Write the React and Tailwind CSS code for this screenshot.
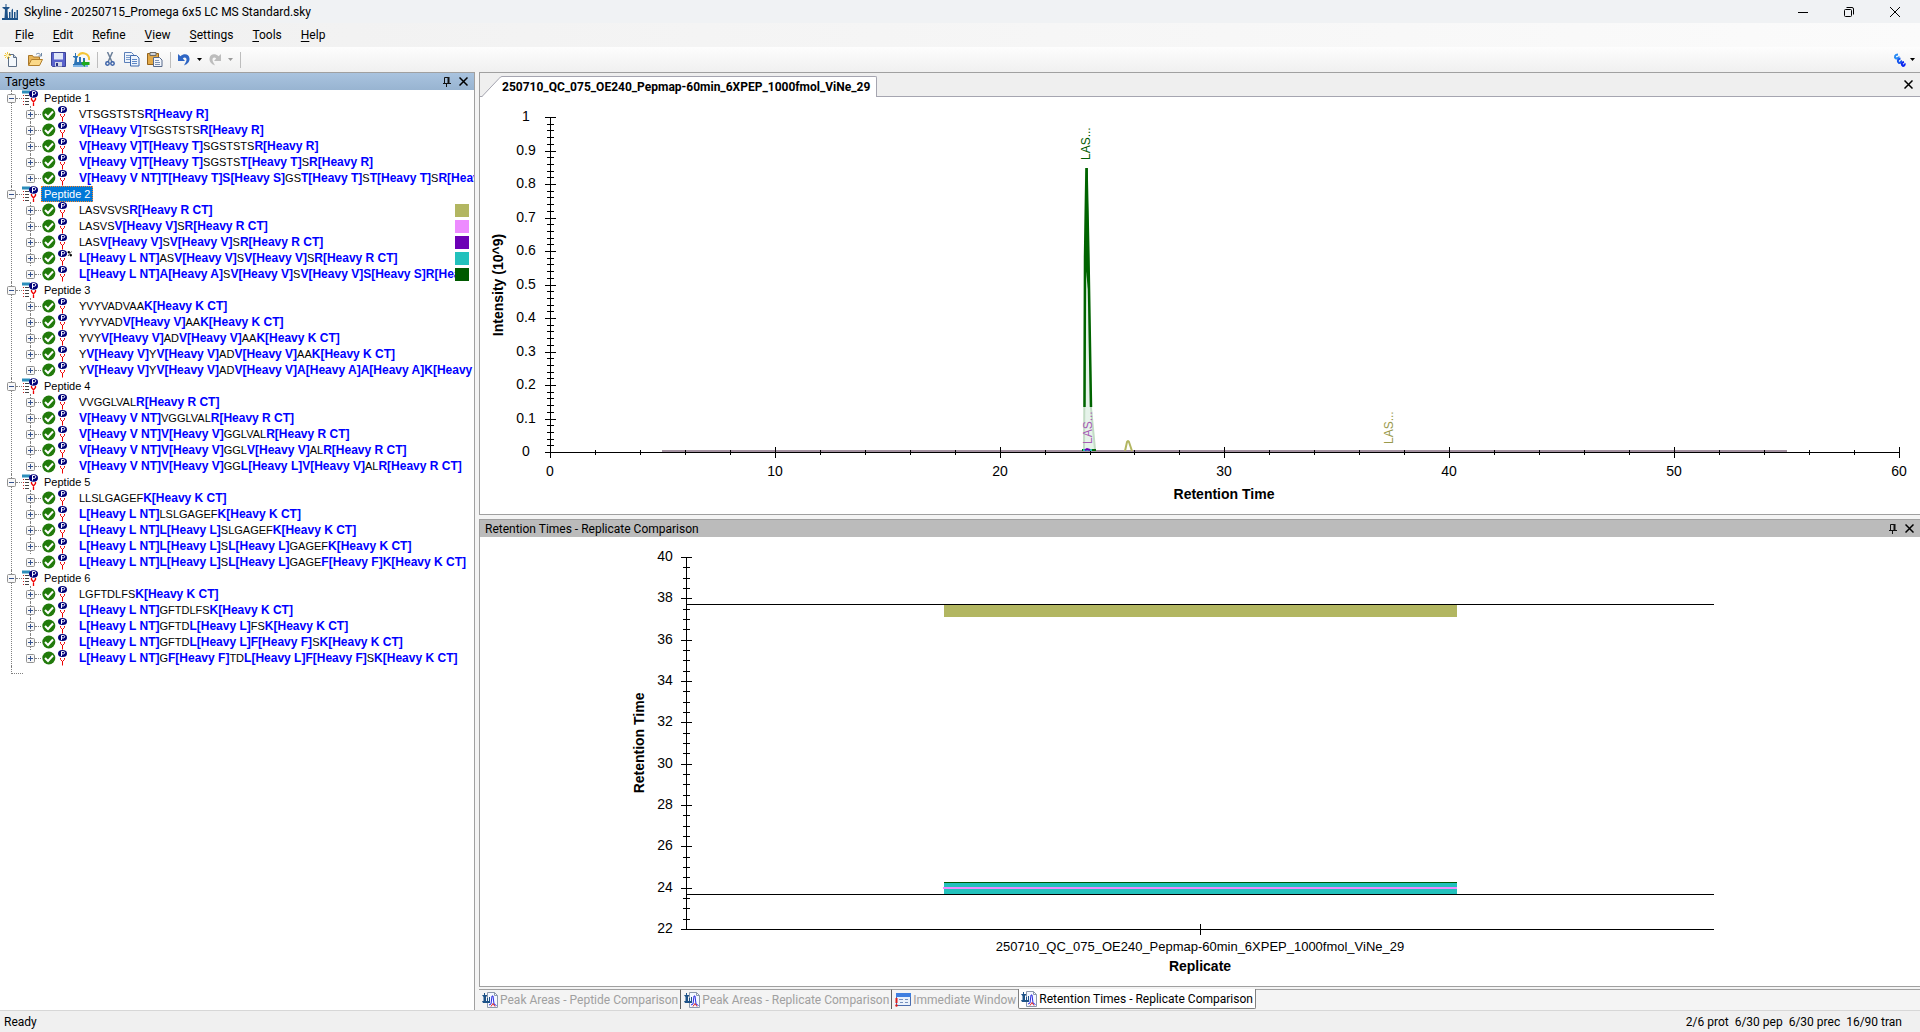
import { Fragment } from 'react';

// Bold blue runs are wrapped in *...*
const TREE = [
  {
    name: 'Peptide 1',
    rows: [
      'VTSGSTSTS*R[Heavy R]*',
      '*V[Heavy V]*TSGSTSTS*R[Heavy R]*',
      '*V[Heavy V]T[Heavy T]*SGSTSTS*R[Heavy R]*',
      '*V[Heavy V]T[Heavy T]*SGSTS*T[Heavy T]*S*R[Heavy R]*',
      '*V[Heavy V NT]T[Heavy T]S[Heavy S]*GS*T[Heavy T]*S*T[Heavy T]*S*R[Heavy R]*',
    ],
  },
  {
    name: 'Peptide 2',
    selected: true,
    rows: [
      'LASVSVS*R[Heavy R CT]*',
      'LASVS*V[Heavy V]*S*R[Heavy R CT]*',
      'LAS*V[Heavy V]*S*V[Heavy V]*S*R[Heavy R CT]*',
      '*L[Heavy L NT]*AS*V[Heavy V]*S*V[Heavy V]*S*R[Heavy R CT]*',
      '*L[Heavy L NT]A[Heavy A]*S*V[Heavy V]*S*V[Heavy V]S[Heavy S]R[Heavy R CT]*',
    ],
    swatches: ['bg-[#b2b661]', 'bg-[#ed8bff]', 'bg-[#6c00b5]', 'bg-[#22c1bc]', 'bg-[#005a00]'],
    best: 3,
  },
  {
    name: 'Peptide 3',
    rows: [
      'YVYVADVAA*K[Heavy K CT]*',
      'YVYVAD*V[Heavy V]*AA*K[Heavy K CT]*',
      'YVY*V[Heavy V]*AD*V[Heavy V]*AA*K[Heavy K CT]*',
      'Y*V[Heavy V]*Y*V[Heavy V]*AD*V[Heavy V]*AA*K[Heavy K CT]*',
      'Y*V[Heavy V]*Y*V[Heavy V]*AD*V[Heavy V]A[Heavy A]A[Heavy A]K[Heavy K CT]*',
    ],
  },
  {
    name: 'Peptide 4',
    rows: [
      'VVGGLVAL*R[Heavy R CT]*',
      '*V[Heavy V NT]*VGGLVAL*R[Heavy R CT]*',
      '*V[Heavy V NT]V[Heavy V]*GGLVAL*R[Heavy R CT]*',
      '*V[Heavy V NT]V[Heavy V]*GGL*V[Heavy V]*AL*R[Heavy R CT]*',
      '*V[Heavy V NT]V[Heavy V]*GG*L[Heavy L]V[Heavy V]*AL*R[Heavy R CT]*',
    ],
  },
  {
    name: 'Peptide 5',
    rows: [
      'LLSLGAGEF*K[Heavy K CT]*',
      '*L[Heavy L NT]*LSLGAGEF*K[Heavy K CT]*',
      '*L[Heavy L NT]L[Heavy L]*SLGAGEF*K[Heavy K CT]*',
      '*L[Heavy L NT]L[Heavy L]*S*L[Heavy L]*GAGEF*K[Heavy K CT]*',
      '*L[Heavy L NT]L[Heavy L]*S*L[Heavy L]*GAGE*F[Heavy F]K[Heavy K CT]*',
    ],
  },
  {
    name: 'Peptide 6',
    rows: [
      'LGFTDLFS*K[Heavy K CT]*',
      '*L[Heavy L NT]*GFTDLFS*K[Heavy K CT]*',
      '*L[Heavy L NT]*GFTD*L[Heavy L]*FS*K[Heavy K CT]*',
      '*L[Heavy L NT]*GFTD*L[Heavy L]F[Heavy F]*S*K[Heavy K CT]*',
      '*L[Heavy L NT]*G*F[Heavy F]*TD*L[Heavy L]F[Heavy F]*S*K[Heavy K CT]*',
    ],
  },
];

const MENU = ['File', 'Edit', 'Refine', 'View', 'Settings', 'Tools', 'Help'];

const range = (n) => Array.from({ length: n }, (_, i) => i);

/* ---------- icons ---------- */

function SkylineLogo() {
  return (
    <svg width="16" height="16" viewBox="0 0 16 16" fill="#1d5288">
      <path d="M0 14h16v2H0z" />
      <path d="M3.500 0h1v3h3v1L5.500 5.500 6 14H2.500L3 5.500.5 4V3h3z" />
      <path d="M7 8h1.500v6H7zM9.500 6l1.500-1.500V14H9.500zM12 8h1.500v6H12zM14.500 6H16v8h-1.500z" />
    </svg>
  );
}

function NewIcon() {
  return (
    <svg width="16" height="16" viewBox="0 0 16 16">
      <path d="M4.500 2.500h5l3 3v9h-8z" fill="#f4f8fc" stroke="#5e6f86" />
      <path d="M9.500 2.500v3h3" fill="#c5d3e4" stroke="#5e6f86" />
      <path d="M3.500 0v7M0 3.500h7M1 1l5 5M6 1L1 6" stroke="#f2c63c" />
      <circle cx="3.500" cy="3.500" r="1.500" fill="#fff6c0" />
    </svg>
  );
}

function OpenIcon() {
  return (
    <svg width="17" height="16" viewBox="0 0 17 16">
      <path d="M1.500 13V3.500h4l1 1.500h6v3" fill="#e8b659" stroke="#a9772a" />
      <path d="M1.500 13.500l3-6h11l-3 6z" fill="#fbd989" stroke="#b27f2c" />
      <path d="M9 2.500c2-2 4-1 5 1M14.500 1v3h-3" fill="none" stroke="#6d87a5" />
    </svg>
  );
}

function SaveIcon() {
  return (
    <svg width="15" height="15" viewBox="0 0 15 15">
      <path d="M.5.5h14v14h-13l-1-1z" fill="#5a63cc" stroke="#3b4298" />
      <path d="M3 1h9v6.500H3z" fill="#dfe6f8" />
      <path d="M4 10h7v4.500H4z" fill="#d3d8e6" />
      <path d="M5 11h2v3H5z" fill="#2b3285" />
    </svg>
  );
}

function PanoramaIcon() {
  return (
    <svg width="17" height="16" viewBox="0 0 17 16">
      <path d="M5 4a6 6 0 0 1 11 4" fill="none" stroke="#f4c536" strokeWidth="2" />
      <path d="M0 15V12h1l1-6-2-1V4h2V1h1v3h2v1L4 6v4h2V5h2v5h2V6h2v9z" fill="#2d74b5" />
      <path d="M0 13h15v2H0z" fill="#7fb5e6" />
      <path d="M8 11.500l4-3.500v2h4.500v3H12v2z" fill="#1faa1f" />
    </svg>
  );
}

function CutIcon() {
  return (
    <svg width="12" height="15" viewBox="0 0 12 15" fill="none">
      <path d="M2.500 0L7 10M7.500 0L3 10" stroke="#6b7f99" strokeWidth="1.500" />
      <circle cx="2.500" cy="11.500" r="1.700" stroke="#3d63a8" strokeWidth="1.500" />
      <circle cx="7.500" cy="11.500" r="1.700" stroke="#3d63a8" strokeWidth="1.500" />
    </svg>
  );
}

function CopyIcon() {
  return (
    <svg width="16" height="15" viewBox="0 0 16 15">
      <path d="M.5.500h7l2 2v8h-9z" fill="#eef4fc" stroke="#5b7fb8" />
      <path d="M2 3.500h4M2 5.500h4M2 7.500h4" stroke="#7b9ccc" />
      <path d="M6.500 3.500h6l2.500 2.500v8H6.500z" fill="#eef4fc" stroke="#3f69ad" />
      <path d="M8 7.500h5M8 9.500h5M8 11.500h5" stroke="#5c86c6" />
    </svg>
  );
}

function PasteIcon() {
  return (
    <svg width="16" height="15" viewBox="0 0 16 15">
      <path d="M.5 1.500h11v11H.5z" fill="#e2a948" stroke="#94631b" />
      <path d="M3 .5h6v3H3z" fill="#cfd3da" stroke="#6d6a63" />
      <path d="M6.500 5.500h6l2.500 2.500v6.500H6.500z" fill="#f2f6fc" stroke="#56688a" />
      <path d="M8 8.500h4M8 10.500h5M8 12.500h5" stroke="#7d92b5" />
    </svg>
  );
}

function UndoIcon({ color, flip }) {
  return (
    <svg width="12" height="13" viewBox="0 0 12 13" className={flip ? '-scale-x-100' : ''}>
      <path d="M0 1v7h7L4.800 5.500c2-2 4-.5 3.700 1.500S7 10.500 6 12.500c4-1.500 5.800-4.500 5.500-7C11 1 6 0 2.500 3.300z" fill={color} />
    </svg>
  );
}

function Caret({ color = '#000' }) {
  return (
    <svg width="5" height="3" viewBox="0 0 5 3">
      <path d="M0 0h5L2.500 3z" fill={color} />
    </svg>
  );
}

function HelixIcon() {
  return (
    <svg width="13" height="14" viewBox="0 0 13 14" fill="none" strokeWidth="2">
      <path d="M5 1.500C2 1.500 1 4 3 5.500c2 0 3-1 2.500-2" stroke="#2a8cf5" />
      <path d="M7.500 5.500c-3 .5-3.500 3-1.500 4.500 2 0 2.500-1.500 2-2.500" stroke="#1555ee" />
      <path d="M11 9c-2.500.5-3 2.500-1 4 1.500-.5 2-1.500 1.500-2.500" stroke="#0a25f0" />
    </svg>
  );
}

function PinIcon() {
  return (
    <svg width="8" height="10" viewBox="0 0 8 10">
      <path d="M1.500 6V.5h4V6M5 0v6M6 0v6M0 6.500h8M3.500 7v3" fill="none" stroke="#111" />
    </svg>
  );
}

function CloseIcon() {
  return (
    <svg width="9" height="9" viewBox="0 0 9 9">
      <path d="M.5.5l8 8M8.500.5l-8 8" stroke="#000" strokeWidth="1.500" />
    </svg>
  );
}

function ExpandBox({ open }) {
  return (
    <svg width="9" height="9" viewBox="0 0 9 9" className="shrink-0">
      <rect x=".5" y=".5" width="8" height="8" rx="1" fill="#f8f8f8" stroke="#919191" />
      <path d={open ? 'M2 4.500h5' : 'M2 4.500h5M4.500 2v5'} stroke="#33518f" />
    </svg>
  );
}

function CheckIcon() {
  return (
    <svg width="14" height="14" viewBox="0 0 14 14" className="shrink-0">
      <circle cx="6.800" cy="7" r="6.500" fill="#217a0b" />
      <path d="M3 7l3 3 5-5.500" fill="none" stroke="#fff" strokeWidth="2" />
    </svg>
  );
}

// "P" ball with the red y-shaped tail
function PeptideIcon({ best }) {
  return (
    <svg width="16" height="16" viewBox="0 0 16 16" className="shrink-0">
      <ellipse cx="4.500" cy="3.500" rx="4.500" ry="3.500" fill="#00007a" />
      <path d="M3.500 6V1.500h2q1.200.1 1.200 1.200t-1.200 1.200h-2" fill="none" stroke="#fff" />
      <path d="M2.500 8v1.500l2 2 2-2V8M4.500 11v4.500" fill="none" stroke="#ee0000" />
      {best && <path d="M10 1.500h1.500V3H10zM12 4.500h1.500V6H12zM13.500 1.500L10 6" fill="#000" stroke="#000" strokeWidth=".7" />}
    </svg>
  );
}

function GroupIcon() {
  return (
    <svg width="16" height="16" viewBox="0 0 16 16" className="shrink-0">
      <path d="M0 2h8" stroke="#2d8ebb" strokeWidth="3" />
      <path d="M1 5.500h1M1 8.500h1M1 11.500h1M1 14.500h1" stroke="#c22" />
      <path d="M3 5.500h4M3 8.500h4M3 11.500h4M3 14.500h4" stroke="#444" />
      <ellipse cx="11.500" cy="4" rx="4.500" ry="3.700" fill="#00007a" />
      <path d="M10.500 6.500v-5h2q1.300.2 1.300 1.400t-1.300 1.400h-2" fill="none" stroke="#fff" />
      <path d="M9.500 8v1.500l2 2.500 2-2.500V8M11.500 11.500V16" fill="none" stroke="#ee0000" strokeWidth="1.300" />
    </svg>
  );
}

function GraphIcon() {
  return (
    <svg width="16" height="16" viewBox="0 0 16 16" className="shrink-0">
      <path d="M5.500.5h7l3 3v12h-10z" fill="#f4f8ff" stroke="#8c98ab" />
      <path d="M12.500.5v3h3" fill="none" stroke="#8c98ab" />
      <path d="M0 9h8v2H1zM0 3h2V1h1v2h2v1L4 5v5H1.500V5zM5 6h1v4H5zM7 5h1v5H7z" fill="#1d5288" />
      <path d="M7 13l2-1 1-8h1l1 8 2.500 1.500" fill="none" stroke="#2a2ae0" />
      <path d="M9 14.500l2-3 2 3" fill="none" stroke="#e02020" />
    </svg>
  );
}

function ImmediateIcon() {
  return (
    <svg width="16" height="14" viewBox="0 0 16 14" className="shrink-0">
      <path d="M1.500.5h14v12h-14z" fill="#eaf1fb" stroke="#4a6cae" />
      <path d="M1 0h15v4H1z" fill="#3f7fe0" />
      <path d="M4 6.500h4M10 6.500h3M5 9.500h3M10 9.500h3" stroke="#7590bd" />
      <path d="M1.500 5v5" stroke="#dd1c1c" strokeWidth="2" />
      <circle cx="1.500" cy="12.500" r="1.200" fill="#dd1c1c" />
    </svg>
  );
}

/* ---------- tree ---------- */

function Sequence({ text }) {
  return (
    <span className="block whitespace-pre text-[11px] leading-4 text-black">
      {text.split('*').map((part, i) =>
        i % 2 ? (
          <b key={i} className="text-xs leading-none text-[#0000ff]">{part}</b>
        ) : (
          <Fragment key={i}>{part}</Fragment>
        )
      )}
    </span>
  );
}

function TargetGroup({ group }) {
  return (
    <li className="ml-[11px] border-l border-dotted border-[#808080]">
      <div className="-ml-[5px] flex h-4 items-center">
        <button type="button" aria-label={`Collapse ${group.name}`} className="flex">
          <ExpandBox open />
        </button>
        <span className="w-1.5 border-t border-dotted border-[#808080]" />
        <GroupIcon />
        <span
          className={`ml-[3px] flex h-4 items-center border px-0.5 text-[11px] leading-4 ${
            group.selected
              ? 'border-dotted border-[#ff8728] bg-[#0078d7] text-white'
              : 'border-transparent text-black'
          }`}
        >
          {group.name}
        </span>
      </div>
      <ul className="ml-[18px]">
        {group.rows.map((row, i) => (
          <li
            key={row}
            className={`flex h-4 items-center border-l ${i < group.rows.length - 1 ? 'border-dotted border-[#808080]' : 'border-transparent'}`}
          >
            <button type="button" aria-label="Expand" className="-ml-[5px] flex">
              <ExpandBox />
            </button>
            <span className="mr-px w-1.5 shrink-0 border-t border-dotted border-[#808080]" />
            <CheckIcon />
            <span className="ml-0.5 flex">
              <PeptideIcon best={group.best === i} />
            </span>
            <span className="min-w-0 flex-1 overflow-hidden pl-[5px]">
              <Sequence text={row} />
            </span>
            {group.swatches && <span className={`mr-[5px] h-[13px] w-3.5 shrink-0 ${group.swatches[i]}`} />}
          </li>
        ))}
      </ul>
    </li>
  );
}

function TargetsPanel() {
  return (
    <aside className="flex w-[475px] shrink-0 flex-col border-r border-t border-[#a0a0a0] bg-white">
      <header className="flex h-[17px] shrink-0 items-center bg-linear-to-b from-[#a9c3df] to-[#98b4d1] pl-[5px] pr-1.5 text-xs text-black">
        <h2 className="flex-1">Targets</h2>
        <button type="button" aria-label="Auto hide" className="mr-2">
          <PinIcon />
        </button>
        <button type="button" aria-label="Close">
          <CloseIcon />
        </button>
      </header>
      <ul className="flex-1 overflow-hidden font-['Liberation_Sans',Arial,sans-serif]">
        {TREE.map((group) => (
          <TargetGroup key={group.name} group={group} />
        ))}
        <li className="ml-[11px] h-2 w-3 border-b border-l border-dotted border-[#808080]" />
      </ul>
    </aside>
  );
}

/* ---------- charts ---------- */

function ChromatogramChart() {
  const x = (v) => 70 + v * 22.48;
  const y = (v) => 355 - v * 335;
  return (
    <svg
      viewBox="0 0 1440 417"
      className="h-full w-full font-['Liberation_Sans',Arial,sans-serif]"
      fontSize="14"
      role="img"
      aria-label="Chromatogram"
    >
      <g shapeRendering="crispEdges" stroke="#000">
        <path d="M182 354h1125" stroke="#a391a0" strokeWidth="2" />
        {range(51).map((i) => {
          const r = i % 5 ? 3 : 5;
          return <path key={i} d={`M${70 - r} ${Math.round(y(i / 50))}.5h${r * 2 + 1}`} />;
        })}
        <path d="M70.500 20v336M70 355.500h1349" />
        {range(31).map((i) => {
          const r = i % 5 ? 2 : 5;
          return <path key={i} d={`M${Math.round(x(i * 2))}.5 ${355 - r}v${r * 2 + 1}`} />;
        })}
      </g>

      <g fill="none">
        <path d="M604 352L606 71l5 240 4 41" fill="#e6f3ea" stroke="#c3dcc5" strokeWidth="2" />
        <path d="M604.500 310L605 160l1.500-89 2 90 2.500 149" stroke="#006400" strokeWidth="2.500" />
        <path d="M605.500 170l1.500-99 2 130" fill="#006400" stroke="#006400" />
        <path d="M602 353h14" stroke="#006400" strokeWidth="2" />
        <path d="M603 353h9" stroke="#22c1bc" strokeWidth="2" />
        <path d="M605 353l2-1 3 1" stroke="#6c00b5" strokeWidth="2" />
        <path d="M645 354l2-9q1-2 2 0l3 9" stroke="#b2b661" strokeWidth="2" />
      </g>

      <g fontSize="12">
        <text transform="translate(610 63) rotate(-90)" fill="#005a00">LAS...</text>
        <text transform="translate(612 347) rotate(-90)" fill="#a65db5">LAS...</text>
        <text transform="translate(913 347) rotate(-90)" fill="#9a9a4c">LAS...</text>
      </g>

      <g textAnchor="middle">
        {range(11).map((i) => (
          <text key={i} x="46" y={Math.round(y(i / 10)) + 4}>{i / 10}</text>
        ))}
        {range(7).map((i) => (
          <text key={i} x={Math.round(x(i * 10))} y="379">{i * 10}</text>
        ))}
        <g fontWeight="bold">
          <text x="744" y="402">Retention Time</text>
          <text transform="translate(23 188) rotate(-90)">Intensity (10^9)</text>
        </g>
      </g>
    </svg>
  );
}

function RetentionTimeChart() {
  const y = (v) => 392 - (v - 22) * 20.67;
  return (
    <svg
      viewBox="0 0 1440 449"
      className="h-full w-full font-['Liberation_Sans',Arial,sans-serif]"
      fontSize="14"
      role="img"
      aria-label="Retention times"
    >
      <g shapeRendering="crispEdges">
        <path d="M464 67h513v13H464z" fill="#b2b661" />
        <path d="M464 345h513v12H464z" fill="#22c1bc" />
        <path d="M464 345.500h513" stroke="#005a00" />
        <path d="M463 351h514" stroke="#ed8bff" strokeWidth="2" />
        <g stroke="#000">
          <path d="M206.500 20v373M206 392.500h1028M206 67.500h1028M206 357.500h1028M720.500 387v11" />
          {range(37).map((i) => {
            const r = i % 4 ? 3 : 5;
            return <path key={i} d={`M${206 - r} ${Math.round(y(22 + i / 2))}.5h${r * 2 + 1}`} />;
          })}
        </g>
      </g>
      <g textAnchor="middle">
        {range(10).map((i) => (
          <text key={i} x="185" y={Math.round(y(22 + i * 2)) + 4}>{22 + i * 2}</text>
        ))}
        <text x="720" y="414" fontSize="13">250710_QC_075_OE240_Pepmap-60min_6XPEP_1000fmol_ViNe_29</text>
        <g fontWeight="bold">
          <text x="720" y="434">Replicate</text>
          <text transform="translate(164 206) rotate(-90)">Retention Time</text>
        </g>
      </g>
    </svg>
  );
}

/* ---------- shell ---------- */

function TitleBar() {
  return (
    <div className="flex h-[23px] items-center bg-[#f0f2f4] pl-0.5 pr-5">
      <SkylineLogo />
      <h1 className="ml-1.5 flex-1 text-xs">Skyline - 20250715_Promega 6x5 LC MS Standard.sky</h1>
      <div className="flex items-center gap-9">
        <button type="button" aria-label="Minimize">
          <svg width="10" height="10" viewBox="0 0 10 10"><path d="M0 5.500h10" stroke="#000" /></svg>
        </button>
        <button type="button" aria-label="Restore">
          <svg width="10" height="10" viewBox="0 0 10 10" fill="none" stroke="#000">
            <rect x=".5" y="2.500" width="7" height="7" rx="1" />
            <path d="M2.500.5H8q1.500 0 1.500 1.500v5.500" />
          </svg>
        </button>
        <button type="button" aria-label="Close window">
          <svg width="10" height="10" viewBox="0 0 10 10"><path d="M0 0l10 10M10 0L0 10" stroke="#000" /></svg>
        </button>
      </div>
    </div>
  );
}

function MenuBar() {
  return (
    <nav className="flex h-6 items-center gap-[19px] bg-linear-to-r from-[#f0f0f0] to-[#fbfbfb] pl-[15px] text-xs">
      {MENU.map((item) => (
        <button key={item} type="button">
          <span className="underline underline-offset-2">{item[0]}</span>
          {item.slice(1)}
        </button>
      ))}
    </nav>
  );
}

function Divider() {
  return <span className="h-4 w-px bg-[#bdbdbd]" />;
}

function Toolbar() {
  return (
    <div className="flex h-[25px] items-center bg-linear-to-b from-[#fdfdfd] to-[#f0f0f0] pl-1 pr-[5px]">
      <div className="flex flex-1 items-center gap-[7px]">
        <button type="button" aria-label="New document"><NewIcon /></button>
        <button type="button" aria-label="Open"><OpenIcon /></button>
        <button type="button" aria-label="Save"><SaveIcon /></button>
        <button type="button" aria-label="Upload to Panorama"><PanoramaIcon /></button>
        <Divider />
        <button type="button" aria-label="Cut"><CutIcon /></button>
        <button type="button" aria-label="Copy"><CopyIcon /></button>
        <button type="button" aria-label="Paste"><PasteIcon /></button>
        <Divider />
        <button type="button" aria-label="Undo"><UndoIcon color="#2f66c4" /></button>
        <button type="button" aria-label="Undo history"><Caret /></button>
        <button type="button" aria-label="Redo"><UndoIcon color="#bdbdbd" flip /></button>
        <button type="button" aria-label="Redo history"><Caret color="#9a9a9a" /></button>
        <Divider />
      </div>
      <button type="button" aria-label="Peptide options" className="flex items-center gap-1">
        <HelixIcon />
        <Caret />
      </button>
    </div>
  );
}

function ChromatogramPanel() {
  return (
    <section className="flex min-h-0 flex-[443] flex-col border-y border-l border-[#a0a0a0] bg-white">
      <div className="flex h-6 shrink-0 items-end border-b border-[#a5a5b0] bg-[#efefef]">
        <svg width="22" height="21" viewBox="0 0 22 21" className="-mb-px shrink-0">
          <path d="M2 21L20 2q1-1.500 2-1.500V21z" fill="#fff" />
          <path d="M0 20.500h2L19 2.500q1.500-2 3-2" fill="none" stroke="#a5a5b0" />
        </svg>
        <button
          type="button"
          className="-mb-px h-[21px] rounded-tr-xs border-r border-t border-[#a5a5b0] bg-white pr-1.5 text-xs font-bold"
        >
          250710_QC_075_OE240_Pepmap-60min_6XPEP_1000fmol_ViNe_29
        </button>
        <button type="button" aria-label="Close document" className="mb-[7px] ml-auto mr-[7px]">
          <CloseIcon />
        </button>
      </div>
      <div className="min-h-0 flex-1">
        <ChromatogramChart />
      </div>
    </section>
  );
}

function RetentionPanel() {
  return (
    <section className="flex min-h-0 flex-[468] flex-col border-y border-l border-[#a0a0a0] bg-white">
      <header className="flex h-[17px] shrink-0 items-center bg-[#bbbbbb] pl-[5px] pr-1.5 text-xs">
        <h2 className="flex-1">Retention Times - Replicate Comparison</h2>
        <button type="button" aria-label="Auto hide" className="mr-2">
          <PinIcon />
        </button>
        <button type="button" aria-label="Close">
          <CloseIcon />
        </button>
      </header>
      <div className="min-h-0 flex-1">
        <RetentionTimeChart />
      </div>
    </section>
  );
}

function DockTabs() {
  const tabs = [
    { label: 'Peak Areas - Peptide Comparison', icon: <GraphIcon /> },
    { label: 'Peak Areas - Replicate Comparison', icon: <GraphIcon /> },
    { label: 'Immediate Window', icon: <ImmediateIcon /> },
    { label: 'Retention Times - Replicate Comparison', icon: <GraphIcon />, active: true },
  ];
  return (
    <div className="mt-0.5 flex h-[21px] shrink-0 items-start bg-[#f4f4f4] text-xs">
      {tabs.map((tab, i) => (
        <button
          key={tab.label}
          type="button"
          className={
            tab.active
              ? 'flex h-5 items-center gap-0.5 rounded-b-xs border-x border-b border-[#808080] bg-white px-0.5'
              : `flex h-5 items-center gap-0.5 border-t border-t-[#a0a0a0] pl-[3px] pr-0.5 text-[#a0a0a0] ${i < 2 ? 'border-r border-r-[#606060]' : ''}`
          }
        >
          {tab.icon}
          <span className="whitespace-nowrap">{tab.label}</span>
        </button>
      ))}
      <span className="flex-1 border-t border-[#a0a0a0]" />
    </div>
  );
}

export default function App() {
  return (
    <div className="flex h-screen flex-col overflow-hidden bg-[#f0f0f0] font-['Roboto','Segoe_UI',sans-serif] text-black">
      <TitleBar />
      <MenuBar />
      <Toolbar />
      <div className="flex min-h-0 flex-1 gap-1 bg-[#f4f4f4]">
        <TargetsPanel />
        <main className="flex min-w-0 flex-1 flex-col">
          <ChromatogramPanel />
          <div className="h-1 shrink-0" />
          <RetentionPanel />
          <DockTabs />
        </main>
      </div>
      <footer className="flex h-[22px] items-center border-t border-[#d7d7d7] bg-[#f0f0f0] pl-1 pr-[18px] text-xs">
        <span className="flex-1">Ready</span>
        <div className="flex gap-1.5">
          <span>2/6 prot</span>
          <span>6/30 pep</span>
          <span>6/30 prec</span>
          <span>16/90 tran</span>
        </div>
      </footer>
    </div>
  );
}
